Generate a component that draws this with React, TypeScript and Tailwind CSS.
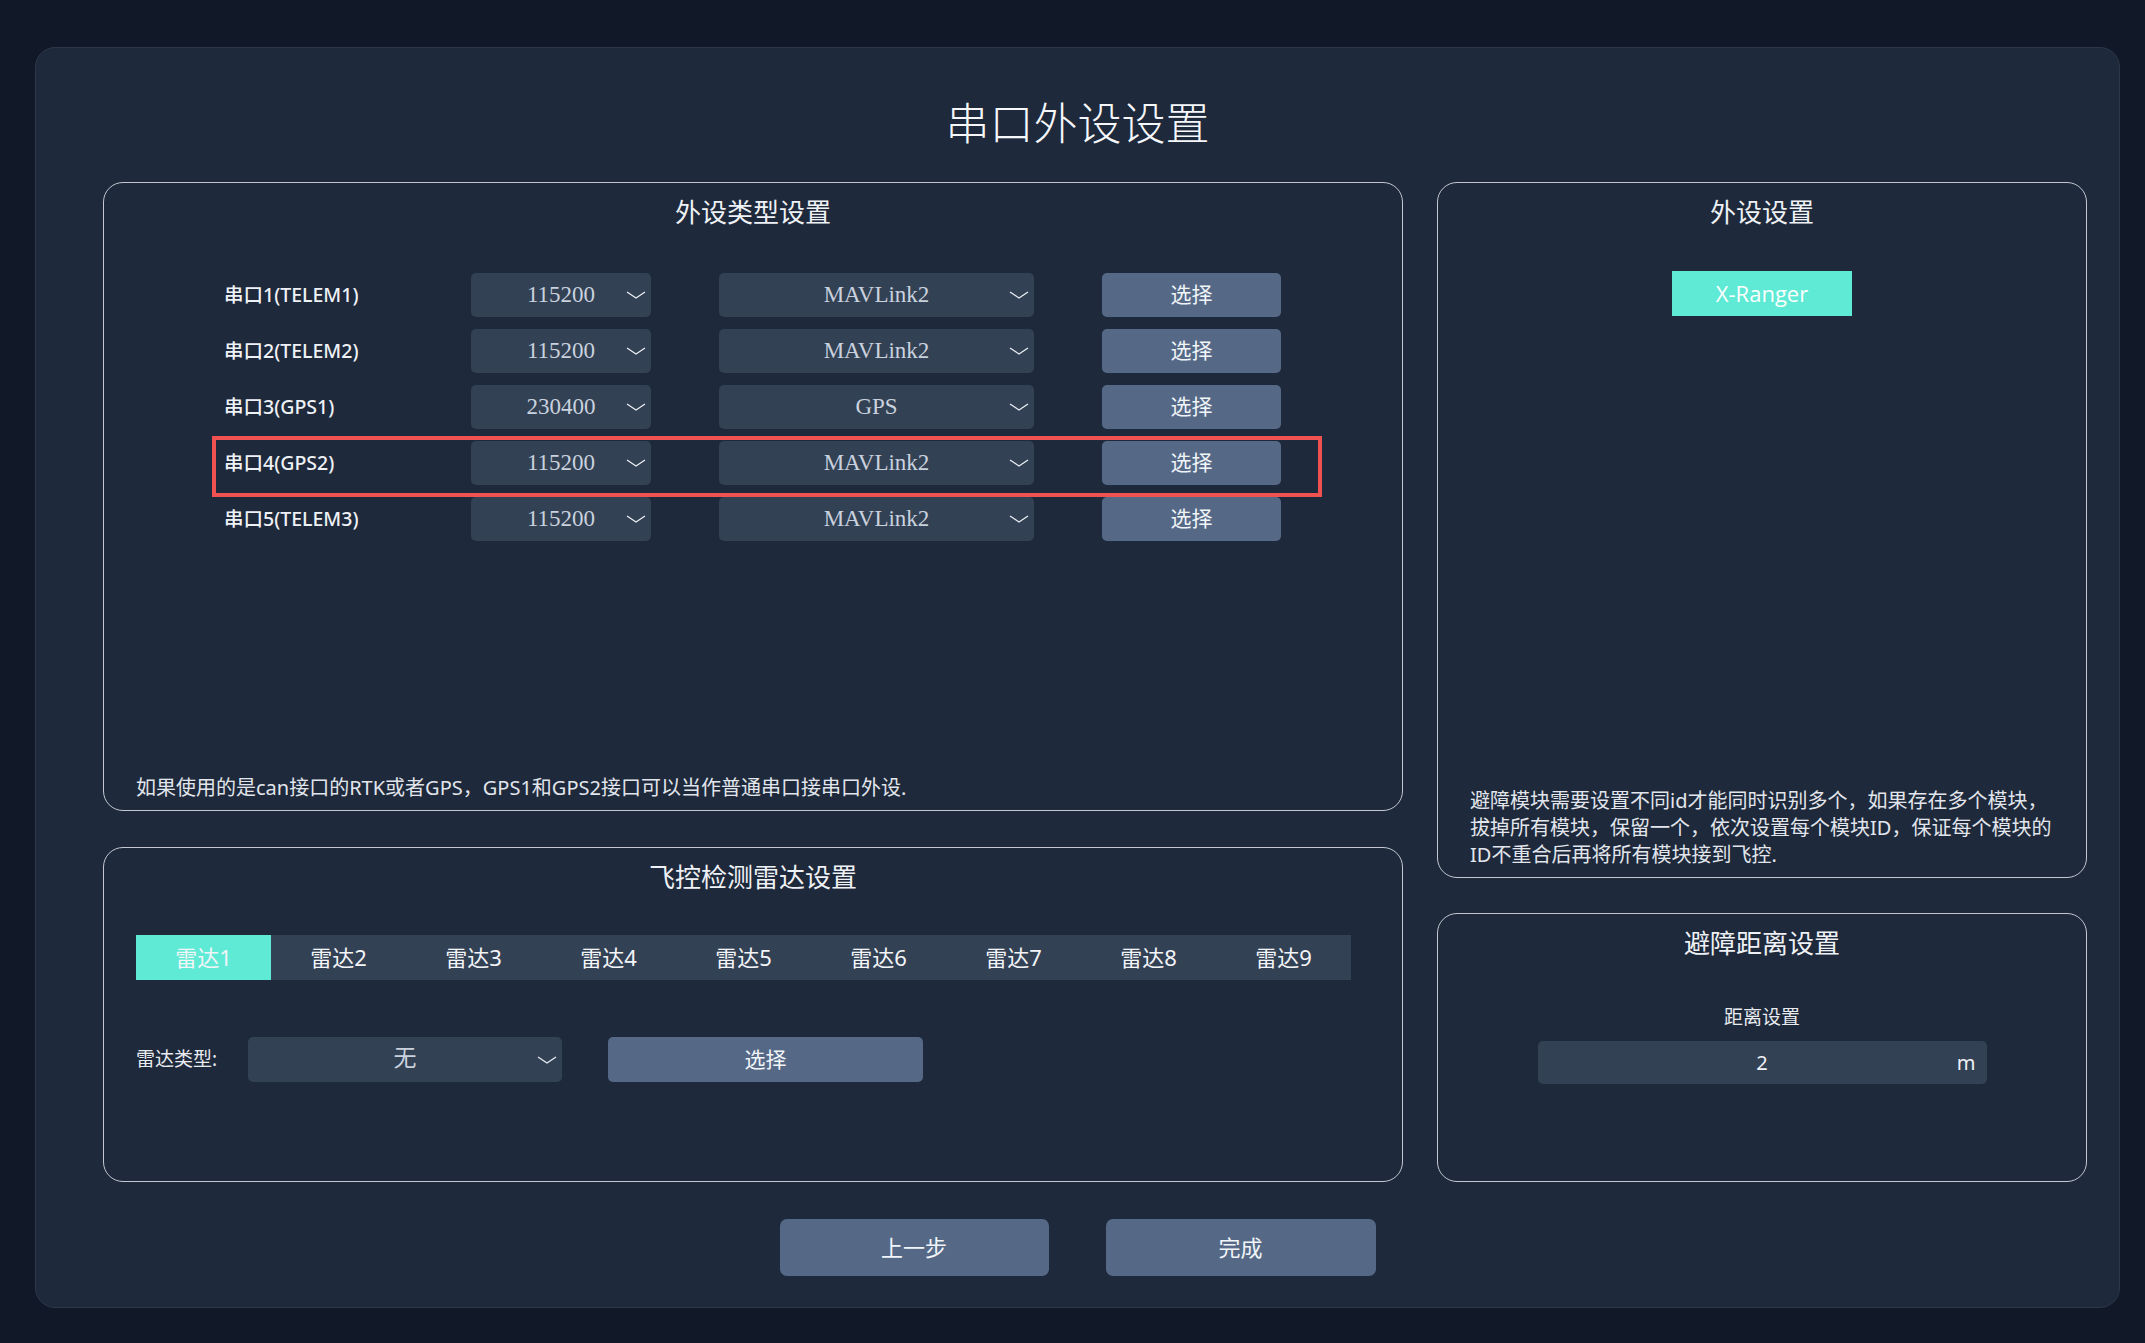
const ports = [
  { name: '串口1(TELEM1)', baud: '115200', proto: 'MAVLink2' },
  { name: '串口2(TELEM2)', baud: '115200', proto: 'MAVLink2' },
  { name: '串口3(GPS1)', baud: '230400', proto: 'GPS' },
  { name: '串口4(GPS2)', baud: '115200', proto: 'MAVLink2', active: true },
  { name: '串口5(TELEM3)', baud: '115200', proto: 'MAVLink2' },
]

const radars = ['雷达1', '雷达2', '雷达3', '雷达4', '雷达5', '雷达6', '雷达7', '雷达8', '雷达9']

const cjk = "font-['Noto_Sans','Noto_Sans_CJK_SC',sans-serif]"

function Chevron() {
  return (
    <svg width="20" height="8" viewBox="0 0 20 8" className="absolute right-[5px] top-1/2 -translate-y-1/2">
      <path d="M1 1 L10 7 L19 1" fill="none" stroke="#e8ecf2" strokeWidth="1.3" />
    </svg>
  )
}

function Select({ value, className }: { value: string; className: string }) {
  return (
    <div className={`relative flex items-center justify-center rounded-[5px] bg-[#334155] ${className}`}>
      <span className="font-['Liberation_Serif','Noto_Sans_CJK_SC',serif] text-[23px] text-[#c9d2de]">{value}</span>
      <Chevron />
    </div>
  )
}

function PickButton({ className }: { className: string }) {
  return (
    <button className={`flex items-center justify-center rounded-[5px] bg-[#556987] text-[21px] text-[#f1f5f9] ${className}`}>
      选择
    </button>
  )
}

function PanelTitle({ children }: { children: string }) {
  return <div className="pt-[11px] text-center text-[26px] leading-[36px] text-[#eef1f5]">{children}</div>
}

export default function App() {
  return (
    <div className={`min-h-[1343px] bg-[#111827] pb-[35px] pl-[35px] pr-[25px] pt-[47px] ${cjk}`}>
      <div className="flex h-[1261px] flex-col rounded-[20px] border border-[#2c374a] bg-[#1e293b] pl-[67px] pr-[31px]">
        <h1 className="mt-[45px] pr-[36px] text-center text-[44px] font-light leading-[60px] text-[#f5f7fa]">串口外设设置</h1>

        <div className="mt-[29px] flex gap-[34px]">
          {/* left column */}
          <div className="flex w-[1300px] flex-col gap-[36px]">
            <section className="flex h-[629px] flex-col rounded-[20px] border-[1.5px] border-[#c3c8d0]">
              <PanelTitle>外设类型设置</PanelTitle>
              <div className="mt-[43px] flex flex-col gap-[12px] pl-[120px]">
                {ports.map((p) => (
                  <div key={p.name} className="relative flex h-[44px] items-center">
                    {p.active && (
                      <div className="absolute -left-[12px] -top-[5px] h-[61px] w-[1110px] border-[4px] border-[#f05252]" />
                    )}
                    <span className="w-[247px] text-[19.5px] font-medium text-[#eef1f5]">{p.name}</span>
                    <Select value={p.baud} className="h-[44px] w-[180px]" />
                    <Select value={p.proto} className="ml-[68px] h-[44px] w-[315px]" />
                    <PickButton className="ml-[68px] h-[44px] w-[179px]" />
                  </div>
                ))}
              </div>
              <p className="mt-auto pb-[8px] pl-[32px] text-[20px] leading-[28px] text-[#e2e6ec]">
                如果使用的是can接口的RTK或者GPS，GPS1和GPS2接口可以当作普通串口接串口外设.
              </p>
            </section>

            <section className="flex h-[335px] flex-col rounded-[20px] border-[1.5px] border-[#c3c8d0]">
              <PanelTitle>飞控检测雷达设置</PanelTitle>
              <div className="ml-[32px] mt-[40px] flex h-[45px] w-[1215px] bg-[#334155]">
                {radars.map((r, i) => (
                  <div
                    key={r}
                    className={`flex w-[135px] items-center justify-center text-[22px] text-[#f3f5f8] ${i === 0 ? 'bg-[#5eead4]' : ''}`}
                  >
                    {r}
                  </div>
                ))}
              </div>
              <div className="ml-[32px] mt-[57px] flex items-center">
                <span className="w-[112px] text-[19px] text-[#e8ebf0]">雷达类型:</span>
                <Select value="无" className="h-[45px] w-[314px]" />
                <PickButton className="ml-[46px] h-[45px] w-[315px]" />
              </div>
            </section>
          </div>

          {/* right column */}
          <div className="flex w-[650px] flex-col gap-[35px]">
            <section className="flex h-[696px] flex-col rounded-[20px] border-[1.5px] border-[#c3c8d0]">
              <PanelTitle>外设设置</PanelTitle>
              <div className="mt-[41px] flex justify-center">
                <div className="flex h-[45px] w-[180px] items-center justify-center bg-[#5eead4] font-['Open_Sans','Noto_Sans_CJK_SC',sans-serif] text-[22px] text-white">
                  X-Ranger
                </div>
              </div>
              <p className="mt-auto whitespace-nowrap pb-[9px] pl-[32px] text-[20px] leading-[27px] text-[#e2e6ec]">
                避障模块需要设置不同id才能同时识别多个，如果存在多个模块，
                <br />
                拔掉所有模块，保留一个，依次设置每个模块ID，保证每个模块的
                <br />
                ID不重合后再将所有模块接到飞控.
              </p>
            </section>

            <section className="flex h-[269px] flex-col rounded-[20px] border-[1.5px] border-[#c3c8d0]">
              <PanelTitle>避障距离设置</PanelTitle>
              <div className="mt-[42px] text-center text-[19px] leading-[28px] text-[#e8ebf0]">距离设置</div>
              <div className="mt-[10px] flex justify-center">
                <div className="relative flex h-[43px] w-[449px] items-center justify-center rounded-[5px] bg-[#334155]">
                  <span className="text-[20px] text-[#eef1f5]">2</span>
                  <span className="absolute right-[11px] text-[20px] text-[#eef1f5]">m</span>
                </div>
              </div>
            </section>
          </div>
        </div>

        <div className="mt-[37px] flex justify-center gap-[57px] pr-[36px]">
          <button className="h-[57px] w-[269px] rounded-[7px] bg-[#556987] text-[22px] text-[#f1f5f9]">上一步</button>
          <button className="h-[57px] w-[270px] rounded-[7px] bg-[#556987] text-[22px] text-[#f1f5f9]">完成</button>
        </div>
      </div>
    </div>
  )
}
